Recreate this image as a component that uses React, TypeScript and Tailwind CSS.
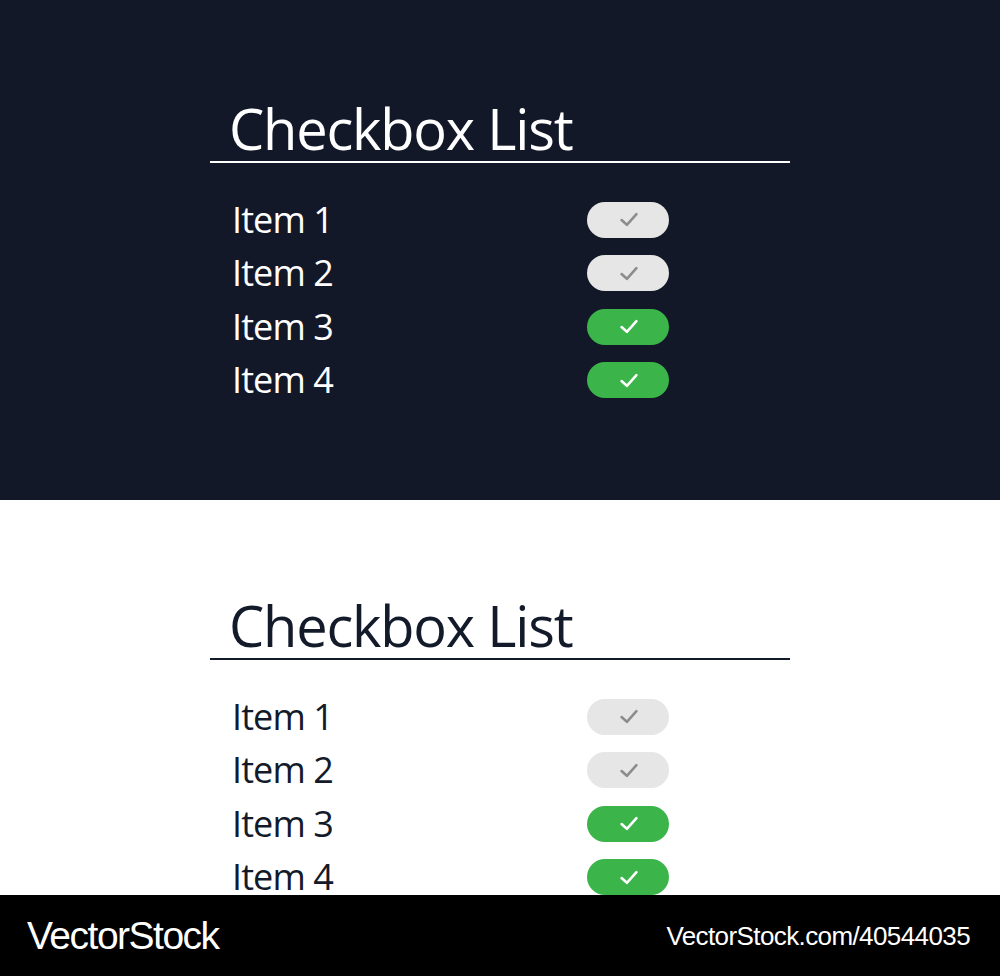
import { useState } from "react"

type Item = { id: number; label: string; checked: boolean }

const initialItems: Item[] = [
  { id: 1, label: "Item 1", checked: false },
  { id: 2, label: "Item 2", checked: false },
  { id: 3, label: "Item 3", checked: true },
  { id: 4, label: "Item 4", checked: true },
]

function CheckIcon({ className }: { className?: string }) {
  return (
    <svg viewBox="0 0 20 16" className={className} fill="none">
      <path d="M3 8.5 L8 13 L17 3" stroke="currentColor" strokeWidth="2.4" strokeLinecap="round" strokeLinejoin="round" />
    </svg>
  )
}

function CheckboxList({ dark }: { dark: boolean }) {
  const [items, setItems] = useState(initialItems)

  const toggle = (id: number) =>
    setItems((prev) => prev.map((it) => (it.id === id ? { ...it, checked: !it.checked } : it)))

  return (
    <div className="ml-[210px] w-[580px]" style={{ fontFamily: '"Open Sans", "Noto Sans", sans-serif' }}>
      <h2
        className={`pl-[19px] text-[56px] leading-[56px] tracking-[-1.2px] ${dark ? "text-white" : "text-[#131a2a]"}`}
      >
        Checkbox List
      </h2>
      <div className={`mt-[5px] h-[2px] ${dark ? "bg-white" : "bg-[#131a2a]"}`} />
      <ul className="mt-[30px] pl-[22px]">
        {items.map((item) => (
          <li key={item.id} className="flex h-[53.5px] items-center">
            <span
              className={`w-[355px] text-[36px] leading-none tracking-[-0.9px] ${dark ? "text-white" : "text-[#131a2a]"}`}
            >
              {item.label}
            </span>
            <button
              onClick={() => toggle(item.id)}
              className={`flex h-[36px] w-[82px] items-center justify-center rounded-full ${
                item.checked ? "bg-[#3bb54a] text-white" : "bg-[#e6e6e6] text-[#8c8c8c]"
              }`}
            >
              <CheckIcon className="ml-[2px] h-[17px] w-[22px]" />
            </button>
          </li>
        ))}
      </ul>
    </div>
  )
}

export default function App() {
  return (
    <div className="w-[1000px]">
      <section className="h-[500px] bg-[#121828] pt-[100px]">
        <CheckboxList dark />
      </section>
      <section className="h-[395px] bg-white pt-[97px]">
        <CheckboxList dark={false} />
      </section>
      <footer
        className="flex h-[81px] items-center justify-between bg-black pl-[27px] pr-[30px] text-white"
        style={{ fontFamily: '"Liberation Sans Narrow", "Liberation Sans", sans-serif' }}
      >
        <span className="text-[39px] leading-none tracking-[-1.5px]">VectorStock</span>
        <span className="text-[26px] leading-none tracking-[-0.6px]">VectorStock.com/40544035</span>
      </footer>
    </div>
  )
}
